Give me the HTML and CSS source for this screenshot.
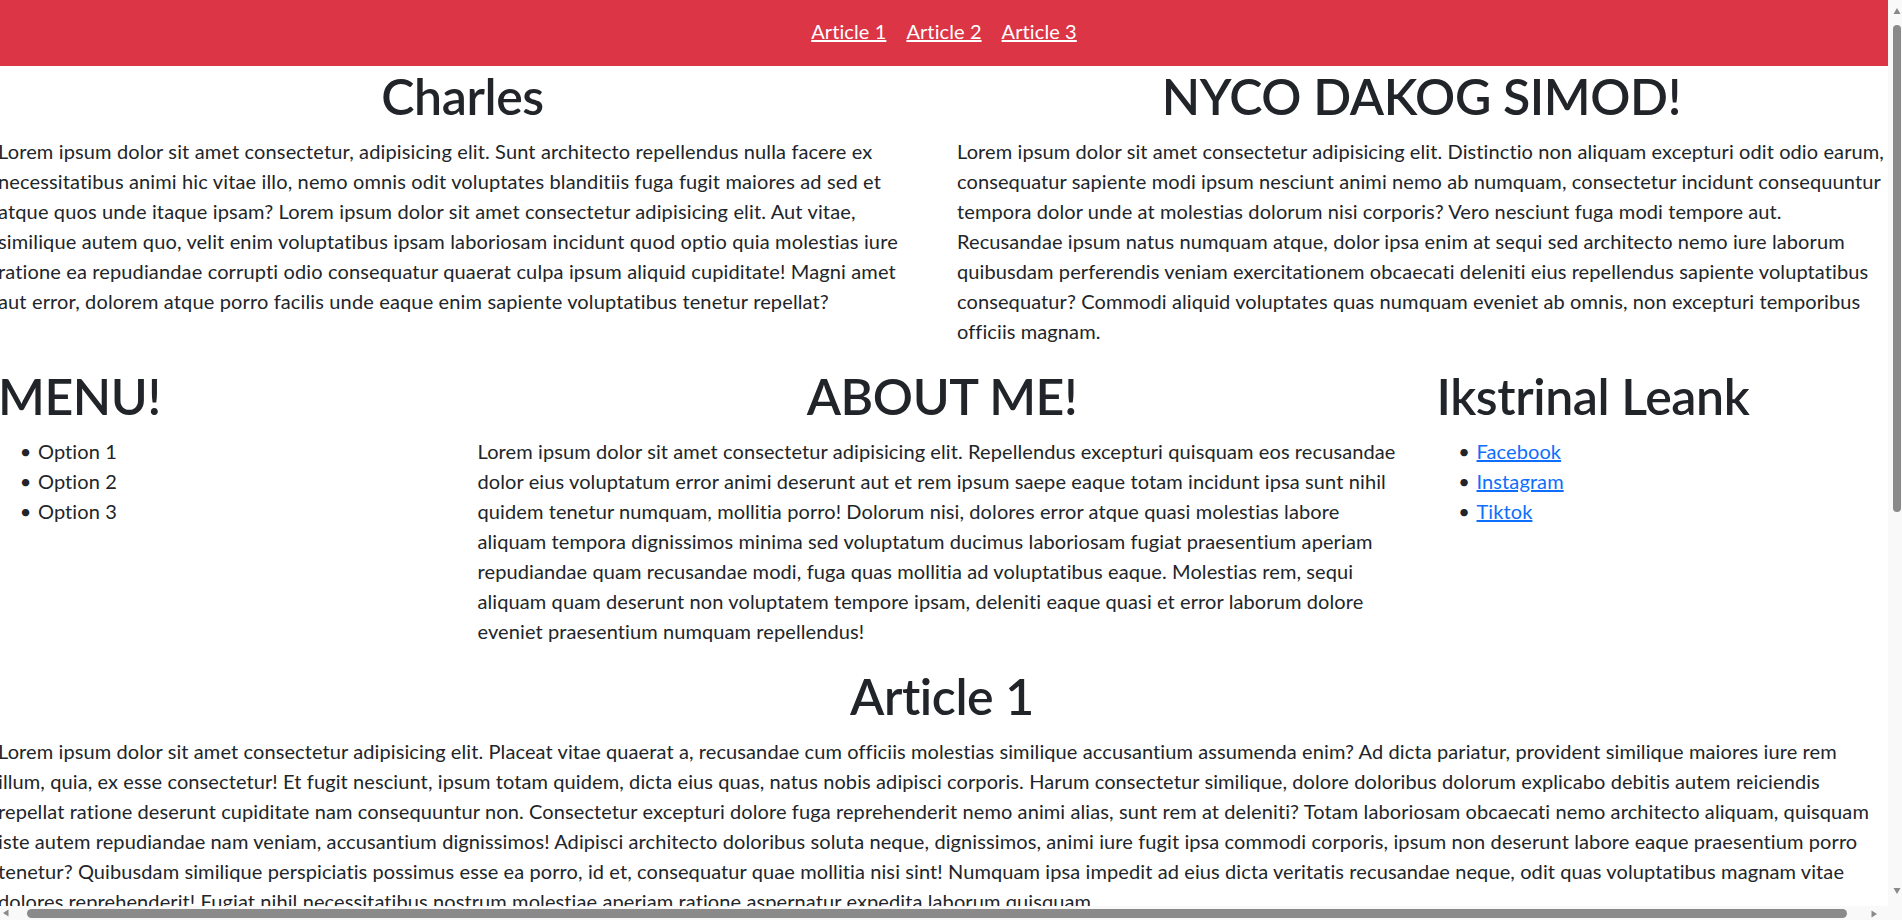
FILE: index.html
```html
<!DOCTYPE html>
<html lang="en">
<head>
<meta charset="utf-8">
<title>Charles</title>
<link rel="stylesheet" href="styles.css">
</head>
<body>
<div class="screen">
  <div class="page">
    <nav class="topnav">
      <a href="#a1">Article 1</a>
      <a href="#a2">Article 2</a>
      <a href="#a3">Article 3</a>
    </nav>

    <div class="row">
      <div class="col col-half">
        <h1 class="center">Charles</h1>
        <p class="intro">Lorem ipsum dolor sit amet consectetur, adipisicing elit. Sunt architecto repellendus nulla facere ex necessitatibus animi hic vitae illo, nemo omnis odit voluptates blanditiis fuga fugit maiores ad sed et atque quos unde itaque ipsam? Lorem ipsum dolor sit amet consectetur adipisicing elit. Aut vitae, similique autem quo, velit enim voluptatibus ipsam laboriosam incidunt quod optio quia molestias iure ratione ea repudiandae corrupti odio consequatur quaerat culpa ipsum aliquid cupiditate! Magni amet aut error, dolorem atque porro facilis unde eaque enim sapiente voluptatibus tenetur repellat?</p>
      </div>
      <div class="col col-half">
        <h1 class="center">NYCO DAKOG SIMOD!</h1>
        <p>Lorem ipsum dolor sit amet consectetur adipisicing elit. Distinctio non aliquam excepturi odit odio earum, consequatur sapiente modi ipsum nesciunt animi nemo ab numquam, consectetur incidunt consequuntur tempora dolor unde at molestias dolorum nisi corporis? Vero nesciunt fuga modi tempore aut. Recusandae ipsum natus numquam atque, dolor ipsa enim at sequi sed architecto nemo iure laborum quibusdam perferendis veniam exercitationem obcaecati deleniti eius repellendus sapiente voluptatibus consequatur? Commodi aliquid voluptates quas numquam eveniet ab omnis, non excepturi temporibus officiis magnam.</p>
      </div>
    </div>

    <div class="row">
      <div class="col col-quarter">
        <h1>MENU!</h1>
        <ul>
          <li>Option 1</li>
          <li>Option 2</li>
          <li>Option 3</li>
        </ul>
      </div>
      <div class="col col-half">
        <h1 class="center">ABOUT ME!</h1>
        <p>Lorem ipsum dolor sit amet consectetur adipisicing elit. Repellendus excepturi quisquam eos recusandae dolor eius voluptatum error animi deserunt aut et rem ipsum saepe eaque totam incidunt ipsa sunt nihil quidem tenetur numquam, mollitia porro! Dolorum nisi, dolores error atque quasi molestias labore aliquam tempora dignissimos minima sed voluptatum ducimus laboriosam fugiat praesentium aperiam repudiandae quam recusandae modi, fuga quas mollitia ad voluptatibus eaque. Molestias rem, sequi aliquam quam deserunt non voluptatem tempore ipsam, deleniti eaque quasi et error laborum dolore eveniet praesentium numquam repellendus!</p>
      </div>
      <div class="col col-quarter">
        <h1>Ikstrinal Leank</h1>
        <ul>
          <li><a href="#">Facebook</a></li>
          <li><a href="#">Instagram</a></li>
          <li><a href="#">Tiktok</a></li>
        </ul>
      </div>
    </div>

    <div class="row" id="a1">
      <div class="col col-full">
        <h1 class="center">Article 1</h1>
        <p>Lorem ipsum dolor sit amet consectetur adipisicing elit. Placeat vitae quaerat a, recusandae cum officiis molestias similique accusantium assumenda enim? Ad dicta pariatur, provident similique maiores iure rem illum, quia, ex esse consectetur! Et fugit nesciunt, ipsum totam quidem, dicta eius quas, natus nobis adipisci corporis. Harum consectetur similique, dolore doloribus dolorum explicabo debitis autem reiciendis repellat ratione deserunt cupiditate nam consequuntur non. Consectetur excepturi dolore fuga reprehenderit nemo animi alias, sunt rem at deleniti? Totam laboriosam obcaecati nemo architecto aliquam, quisquam iste autem repudiandae nam veniam, accusantium dignissimos! Adipisci architecto doloribus soluta neque, dignissimos, animi iure fugit ipsa commodi corporis, ipsum non deserunt labore eaque praesentium porro tenetur? Quibusdam similique perspiciatis possimus esse ea porro, id et, consequatur quae mollitia nisi sint! Numquam ipsa impedit ad eius dicta veritatis recusandae neque, odit quas voluptatibus magnam vitae dolores reprehenderit! Fugiat nihil necessitatibus nostrum molestiae aperiam ratione aspernatur expedita laborum quisquam.</p>
      </div>
    </div>
  </div>

  <div class="vbar" aria-hidden="true">
    <svg class="arrow" width="8" height="8" viewBox="0 0 8 8"><path d="M4 1 L7.5 7 L0.5 7 Z"/></svg>
    <div class="vthumb"></div>
    <div class="bar-fill"></div>
    <svg class="arrow" width="8" height="8" viewBox="0 0 8 8"><path d="M0.5 1 L7.5 1 L4 7 Z"/></svg>
  </div>

  <div class="hbar" aria-hidden="true">
    <svg class="arrow" width="7" height="8" viewBox="0 0 7 8"><path d="M1 4 L6.5 0.5 L6.5 7.5 Z"/></svg>
    <div class="hthumb"></div>
    <div class="bar-fill"></div>
    <svg class="arrow arrow-right" width="7" height="8" viewBox="0 0 7 8"><path d="M0.5 0.5 L6 4 L0.5 7.5 Z"/></svg>
  </div>

  <div class="corner"></div>
</div>
</body>
</html>
```

FILE: styles.css
```css
* {
  box-sizing: border-box;
}

html,
body {
  margin: 0;
  height: 100%;
  overflow: hidden;
}

body {
  font-family: Lato, "Segoe UI", "Noto Sans", sans-serif;
  font-size: 20px;
  line-height: 1.5;
  letter-spacing: 0.1px;
  color: #212529;
  background: #fff;
}

/* window: page area + scrollbars */
.screen {
  height: 100vh;
  display: grid;
  grid-template-columns: 1fr 14px;
  grid-template-rows: 1fr 14px;
}

.page {
  overflow: hidden;
  min-width: 0;
  min-height: 0;
}

.vbar {
  background: #f9f9f9;
  display: flex;
  flex-direction: column;
  align-items: flex-start;
  padding: 7px 1px 11px 5px;
}

.vthumb {
  width: 8px;
  height: 487px;
  margin-top: 10px;
  background: #8a8a8a;
  border-radius: 4px;
}

.hbar {
  background: #f9f9f9;
  display: flex;
  align-items: flex-start;
  padding: 3px 10px 0 2px;
}

.hthumb {
  width: 1820px;
  height: 9px;
  margin-left: 18px;
  background: #8a8a8a;
  border-radius: 4.5px;
}

.bar-fill {
  flex: 1;
}

.arrow {
  display: block;
  fill: #8a8a8a;
  flex: none;
}

.arrow-right {
  margin-top: 1px;
}

.corner {
  background: #f9f9f9;
}

/* navigation */
.topnav {
  background: #dc3545;
  height: 66px;
  display: flex;
  justify-content: center;
  align-items: flex-start;
  padding-top: 16px;
  gap: 20px;
}

.topnav a {
  color: #fff;
  text-decoration: underline;
}

/* grid (page is scrolled 2px to the right in the reference) */
.row {
  display: flex;
  margin: 0 -13px 0 -17px;
}

.col {
  padding: 0 15px;
  min-width: 0;
}

.col-half {
  flex: 0 0 50%;
}

.col-quarter {
  flex: 0 0 25%;
}

.col-full {
  flex: 0 0 100%;
}

h1 {
  font-size: 50px;
  font-weight: 600;
  line-height: 1.2;
  letter-spacing: -0.4px;
  margin: 0 0 10px;
}

.center {
  text-align: center;
}

p {
  margin: 0 0 20px;
}

.intro {
  letter-spacing: 0.14px;
}

ul {
  margin: 0 0 20px;
  padding-left: 40px;
}

li::marker {
  content: "\2022\200A\0020";
}

a {
  color: #0d6efd;
}
```
